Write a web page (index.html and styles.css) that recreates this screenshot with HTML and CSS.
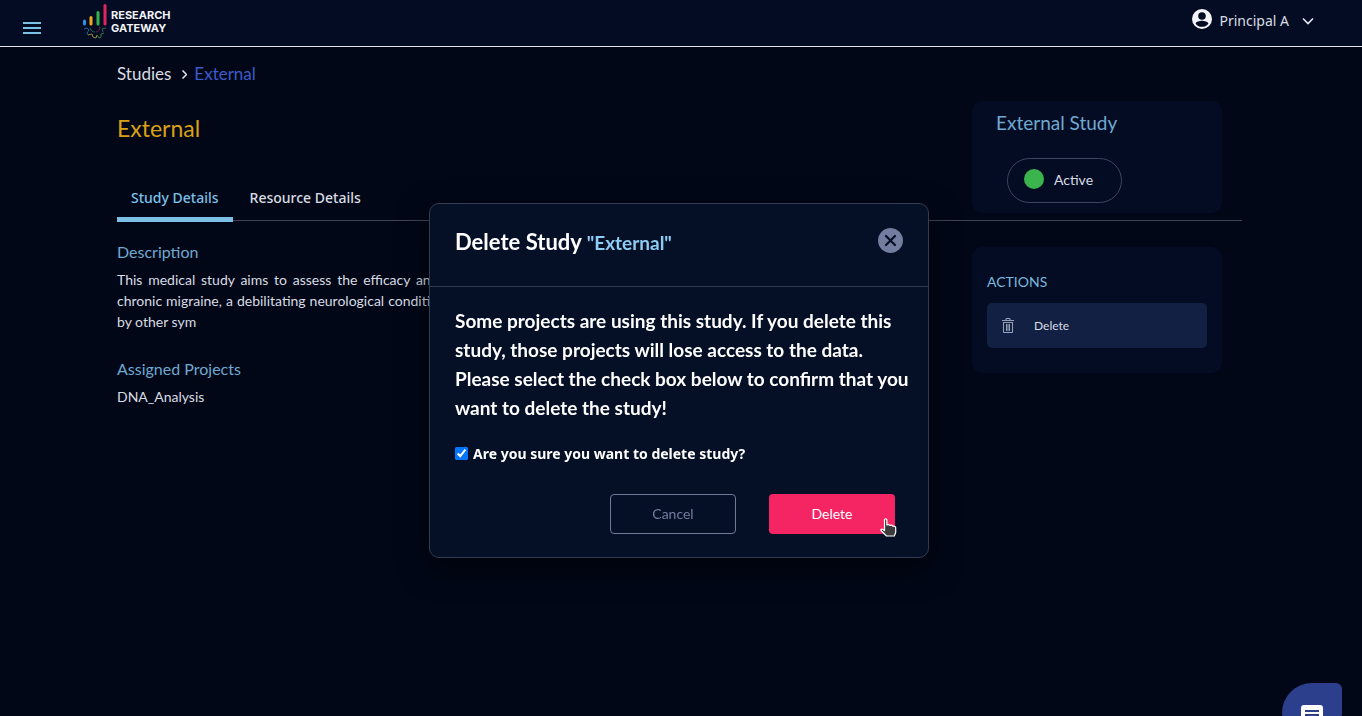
FILE: index.html
```html
<!DOCTYPE html>
<html lang="en">
<head>
    <meta charset="UTF-8">
    <meta name="viewport" content="width=device-width, initial-scale=1.0">
    <title>Research Gateway - External</title>
    <link rel="stylesheet" href="styles.css">
</head>
<body>

    <header class="topbar">
        <button type="button" class="menu-btn" aria-label="Open menu">
            <svg width="18" height="12" viewBox="0 0 18 12"><path d="M0 1h18M0 6h18M0 11h18" stroke="#7cc0e6" stroke-width="2"/></svg>
        </button>
        <a href="#" class="logo">
            <svg width="24" height="36" viewBox="0 0 24 36" fill="none">
                <g stroke-width="3" stroke-linecap="round">
                    <path d="M1.500 17v3" stroke="#2a8fdc"/>
                    <path d="M8 13.500v6.500" stroke="#f0a81c"/>
                    <path d="M15 8.500v11.500" stroke="#35b04a"/>
                    <path d="M22 1.500v18.500" stroke="#e0245e"/>
                </g>
                <path d="M1 25l3-1 2 2-2 3 1 2" stroke="#226695"/>
                <path d="M5 31l4-1 1 3 3 1 1-3" stroke="#9a843a"/>
                <path d="M14 31l2 3 2-1v-3l3-1" stroke="#2f7a42"/>
                <path d="M20 28l-1-3 4-1M7 24c1 3 3 4 5 4" stroke="#2a6650"/>
                <path d="M17 23c0 3-2 5-4 5" stroke="#762444"/>
            </svg>
            <span>RESEARCH<br>GATEWAY</span>
        </a>
        <button type="button" class="user-menu">
            <svg width="24" height="24" viewBox="0 0 24 24"><path fill="#f2f4f8" fill-rule="evenodd" d="M12 2a10 10 0 1 0 0 20 10 10 0 0 0 0-20zm0 3.200a3.800 3.800 0 1 1 0 7.600 3.800 3.800 0 0 1 0-7.600zm0 14.600c-2.800 0-5.100-1.300-6.400-3.400.6-1.700 4-2.600 6.400-2.600s5.800.9 6.400 2.600c-1.300 2.100-3.600 3.400-6.400 3.400z"/></svg>
            <span>Principal A</span>
            <svg class="caret" width="12" height="8" viewBox="0 0 12 8"><path d="M1 1.500l5 5 5-5" fill="none" stroke="#e4e8f0" stroke-width="1.600"/></svg>
        </button>
    </header>

    <main class="page">
        <nav class="breadcrumb" aria-label="Breadcrumb">
            <a href="#">Studies</a>
            <svg width="5" height="9" viewBox="0 0 5 9"><path d="M.5.5l4 4-4 4" fill="none" stroke="#e4e8f0" stroke-width="1.500"/></svg>
            <a href="#" class="current">External</a>
        </nav>

        <!-- Title, tabs and status -->
        <section class="study-head">
            <div class="head-left">
                <h1>External</h1>
                <div class="tabs" role="tablist">
                    <button type="button" class="tab active" role="tab" aria-selected="true">Study Details</button>
                    <button type="button" class="tab" role="tab" aria-selected="false">Resource Details</button>
                </div>
            </div>
            <aside class="card status-card">
                <h2>External Study</h2>
                <div class="status-pill"><span class="dot"></span>Active</div>
            </aside>
        </section>

        <!-- Study details -->
        <section class="study-body">
            <div class="details">
                <h3>Description</h3>
                <p>This medical study aims to assess the efficacy and safety of a new oral drug in the treatment of adult patients living with chronic migraine, a debilitating neurological condition characterized by frequent, severe headaches that are often accompanied by other sym</p>
                <h3>Assigned Projects</h3>
                <p>DNA_Analysis</p>
            </div>
            <aside class="card actions-card">
                <h4>ACTIONS</h4>
                <button type="button" class="action-btn">
                    <svg width="12" height="15" viewBox="0 0 12 15" fill="none" stroke="#98a1b5"><path d="M0 2.500h12M4 2V.5h4V2M1.500 4v10.500h9V4M1 4.500h10M4.500 6v7M6 6v7M7.500 6v7"/></svg>
                    Delete
                </button>
            </aside>
        </section>
    </main>

    <!-- Delete confirmation -->
    <div class="overlay">
        <div class="modal" role="dialog" aria-modal="true" aria-labelledby="modalTitle">
            <div class="modal-header">
                <h2 id="modalTitle">Delete Study <span>"External"</span></h2>
                <button type="button" class="close-btn" aria-label="Close">
                    <svg width="25" height="25" viewBox="0 0 25 25"><circle cx="12.500" cy="12.500" r="12.500" fill="#727d9f"/><path d="M8 8l9 9M17 8l-9 9" stroke="#050f26" stroke-width="2.200" stroke-linecap="round"/></svg>
                </button>
            </div>
            <div class="modal-body">
                <p>Some projects are using this study. If you delete this study, those projects will lose access to the data. Please select the check box below to confirm that you want to delete the study!</p>
                <div class="confirm">
                    <input type="checkbox" id="confirmDelete" checked>
                    <label for="confirmDelete">Are you sure you want to delete study?</label>
                </div>
                <div class="modal-buttons">
                    <button type="button" class="btn btn-cancel">Cancel</button>
                    <button type="button" class="btn btn-delete">Delete
                        <svg class="pointer" width="17" height="19" viewBox="0 0 17 19"><path d="M4.500 1.800c0-1.200 2.400-1.200 2.400 0V7l1.600-.6 1.700 1 1.500-.4 1.400 1.200c1.700-.3 2.600.6 2.600 1.800v4.500l-1.400 3.500H6.500L1.200 12.800c-.9-1.300.6-2.300 1.700-1.400l1.600 1.300z" fill="#3b3b3b" stroke="#fff" stroke-width="1.200" stroke-linejoin="round"/></svg>
                    </button>
                </div>
            </div>
        </div>
    </div>

    <button type="button" class="chat-btn" aria-label="Open chat">
        <svg width="24" height="24" viewBox="0 0 24 24"><path d="M4 1h16a3 3 0 0 1 3 3v18l-5-4H4a3 3 0 0 1-3-3V4a3 3 0 0 1 3-3z" fill="#fff"/><path d="M5 7h14M5 11h14" stroke="#2b3f8c" stroke-width="2"/></svg>
    </button>

</body>
</html>
```
FILE: styles.css
```css
/* General page styling */
* {
    box-sizing: border-box;
}

body {
    margin: 0;
    min-height: 100vh;
    background-color: #010717;
    color: #d9dce3;
    font-family: Lato, sans-serif;
    font-size: 14px;
    line-height: 21px;
}

h1, h2, h3, h4, p {
    margin: 0;
    font-weight: normal;
}

a {
    color: inherit;
    text-decoration: none;
}

button {
    border: none;
    padding: 0;
    background: none;
    color: inherit;
    font: inherit;
    cursor: pointer;
}

svg {
    display: block;
    flex: none;
}

/* Top bar */
.topbar {
    display: flex;
    align-items: center;
    height: 47px;
    padding: 0 48px 0 23px;
    background-color: #040c23;
    border-bottom: 1px solid #dfe3ea;
}

.menu-btn {
    padding-top: 10px;
}

.logo {
    display: flex;
    align-items: center;
    gap: 4px;
    margin-left: 42px;
    padding-bottom: 2px;
    color: #f2f4f8;
    font-family: Inter, sans-serif;
    font-size: 11px;
    font-weight: bold;
    line-height: 13px;
}

.user-menu {
    display: flex;
    align-items: center;
    gap: 5px;
    margin-left: auto;
    padding-bottom: 8px;
    font-family: "Noto Sans", sans-serif;
}

.user-menu span {
    padding-top: 3px;
}

.user-menu .caret {
    margin: 4px 0 0 8px;
}

/* Page */
.page {
    padding: 15px 120px 40px 117px;
}

.breadcrumb {
    display: flex;
    align-items: center;
    gap: 7px;
    margin-bottom: 15px;
    font-size: 17px;
    line-height: 24px;
}

.breadcrumb svg {
    margin-left: 4px;
}

.breadcrumb .current {
    color: #3c5bcb;
}

.card {
    flex: none;
    width: 250px;
    margin-right: 20px;
    background-color: #040c24;
    border-radius: 10px;
}

.study-head {
    display: flex;
    justify-content: space-between;
    border-bottom: 1px solid #3d4555;
}

.head-left {
    display: flex;
    flex-direction: column;
    justify-content: space-between;
    padding-top: 11px;
}

h1 {
    color: #daa016;
    font-size: 23px;
    line-height: 32px;
}

.tabs {
    display: flex;
    margin-bottom: -2px;
}

.tab {
    padding: 0 14px 9px;
    border-bottom: 5px solid transparent;
    font-family: "Noto Sans", sans-serif;
    font-weight: 500;
}

.tab + .tab {
    margin-left: 3px;
}

.tab.active {
    border-color: #7cc0e6;
    color: #7cc0e6;
}

.status-card {
    margin-bottom: 7px;
    padding: 10px 24px;
}

.status-card h2 {
    color: #6fa9d0;
    font-size: 19px;
    line-height: 24px;
}

.status-pill {
    display: flex;
    align-items: center;
    gap: 10px;
    width: 115px;
    height: 45px;
    margin: 23px 0 0 11px;
    padding: 0 16px 3px;
    border: 1px solid #3d4560;
    border-radius: 23px;
}

.dot {
    width: 20px;
    height: 20px;
    border-radius: 50%;
    background-color: #3bb44e;
}

.study-body {
    display: flex;
    align-items: flex-start;
    justify-content: space-between;
    gap: 50px;
}

.details {
    max-width: 780px;
    padding-top: 19px;
    text-align: justify;
}

.details h3 {
    margin-bottom: 5px;
    color: #6fa9d0;
    font-size: 16px;
    line-height: 24px;
}

.details p {
    margin-bottom: 25px;
}

.actions-card {
    margin-top: 26px;
    padding: 24px 15px 25px;
}

.actions-card h4 {
    margin-bottom: 11px;
    color: #7cb8de;
}

.action-btn {
    display: flex;
    align-items: center;
    gap: 20px;
    width: 100%;
    height: 45px;
    padding: 0 15px;
    border-radius: 5px;
    background-color: #122043;
    font-size: 12px;
}

/* Delete modal */
.overlay {
    position: fixed;
    inset: 0;
    display: flex;
    align-items: center;
    justify-content: center;
    padding: 45px 4px 0 0;
}

.modal {
    width: 500px;
    background-color: #050f26;
    border: 1px solid #333b50;
    border-radius: 10px;
    box-shadow: 0 10px 30px rgba(0, 0, 0, 0.6);
    color: white;
}

.modal-header {
    display: flex;
    align-items: flex-start;
    justify-content: space-between;
    padding: 24px 25px 31px;
    border-bottom: 1px solid #333b50;
}

.modal-header h2 {
    padding-top: 1px;
    font-size: 22px;
    font-weight: bold;
    line-height: 25px;
}

.modal-header span {
    color: #8dccf3;
    font-size: 19px;
}

.modal-body {
    padding: 19px 15px 23px 25px;
}

.modal-body p {
    font-size: 19px;
    font-weight: bold;
    line-height: 29px;
}

.confirm {
    display: flex;
    align-items: center;
    gap: 5px;
    margin-top: 21px;
    font-family: "Noto Sans", sans-serif;
    font-weight: bold;
}

.confirm input {
    width: 13px;
    height: 13px;
    margin: 0;
}

.modal-buttons {
    display: flex;
    justify-content: flex-end;
    gap: 33px;
    margin-top: 30px;
    padding-right: 18px;
}

.btn {
    position: relative;
    width: 126px;
    height: 40px;
    padding-bottom: 2px;
    border-radius: 4px;
}

.btn-cancel {
    border: 1px solid #6f7a99;
    color: #727d9f;
}

.btn-delete {
    background-color: #f52563;
    color: white;
}

.pointer {
    position: absolute;
    right: -2px;
    bottom: -3px;
}

/* Chat launcher */
.chat-btn {
    position: fixed;
    right: 20px;
    bottom: -27px;
    display: flex;
    justify-content: center;
    width: 60px;
    height: 60px;
    padding-top: 21px;
    border-radius: 30px 6px 30px 30px;
    background-color: #2b3f8c;
}
```
